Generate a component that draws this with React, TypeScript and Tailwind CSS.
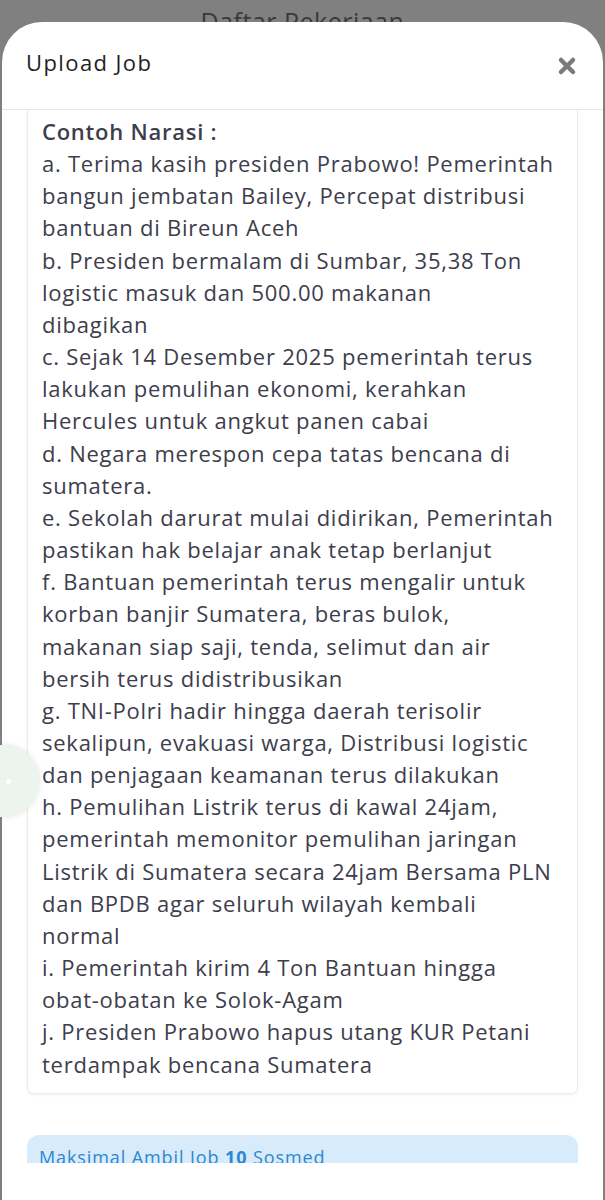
import React from 'react';

const lines: string[] = [
  'a. Terima kasih presiden Prabowo! Pemerintah',
  'bangun jembatan Bailey, Percepat distribusi',
  'bantuan di Bireun Aceh',
  'b. Presiden bermalam di Sumbar, 35,38 Ton',
  'logistic masuk dan 500.00 makanan',
  'dibagikan',
  'c. Sejak 14 Desember 2025 pemerintah terus',
  'lakukan pemulihan ekonomi, kerahkan',
  'Hercules untuk angkut panen cabai',
  'd. Negara merespon cepa tatas bencana di',
  'sumatera.',
  'e. Sekolah darurat mulai didirikan, Pemerintah',
  'pastikan hak belajar anak tetap berlanjut',
  'f. Bantuan pemerintah terus mengalir untuk',
  'korban banjir Sumatera, beras bulok,',
  'makanan siap saji, tenda, selimut dan air',
  'bersih terus didistribusikan',
  'g. TNI-Polri hadir hingga daerah terisolir',
  'sekalipun, evakuasi warga, Distribusi logistic',
  'dan penjagaan keamanan terus dilakukan',
  'h. Pemulihan Listrik terus di kawal 24jam,',
  'pemerintah memonitor pemulihan jaringan',
  'Listrik di Sumatera secara 24jam Bersama PLN',
  'dan BPDB agar seluruh wilayah kembali',
  'normal',
  'i. Pemerintah kirim 4 Ton Bantuan hingga',
  'obat-obatan ke Solok-Agam',
  'j. Presiden Prabowo hapus utang KUR Petani',
  'terdampak bencana Sumatera',
];

export default function App() {
  return (
    <div className="relative h-[1200px] w-[605px] overflow-hidden bg-[#808080] font-['Open_Sans',sans-serif]">
      {/* page behind the sheet */}
      <div className="flex h-[22px] items-end justify-center">
        <span className="translate-y-[12px] text-[25px] leading-none tracking-[0.5px] text-[#3a3a3a]">Daftar Pekerjaan</span>
      </div>

      {/* sheet */}
      <div className="relative mx-[2px] flex h-[1178px] flex-col rounded-t-[40px] bg-white">
        <header className="flex h-[88px] shrink-0 items-center justify-between border-b border-[#e6e6e6] pb-[6px] pl-[24px] pr-[26px]">
          <h2 className="text-[22px] font-medium tracking-[1.4px] text-[#1f1f1f]">Upload Job</h2>
          <svg width="20" height="20" viewBox="0 0 20 20" className="mt-[6px]">
            <path d="M4 4 L16 16 M16 4 L4 16" stroke="#7a7a7a" strokeWidth="4.5" strokeLinecap="round" />
          </svg>
        </header>

        <div className="h-[1053px] overflow-hidden px-[25px]">
          <div className="rounded-b-[6px] border border-t-0 border-[#ececec] px-[14px] pb-[13px] pt-[5px] shadow-[0_1px_3px_rgba(0,0,0,0.06)]">
            <div className="whitespace-nowrap text-[22px] leading-[32.15px] tracking-[0.75px] text-[#3d3d4c]">
              <div className="font-semibold">Contoh Narasi :</div>
              {lines.map((l, i) => (
                <div key={i}>{l}</div>
              ))}
            </div>
          </div>

          <div className="mt-[41px] h-[60px] rounded-t-[12px] bg-[#d8ebfa] px-[12px] pt-[9px]">
            <p className="text-[18px] tracking-[0.9px] text-[#2a88d3]">
              Maksimal Ambil Job <span className="font-bold">10</span> Sosmed
            </p>
          </div>
        </div>
      </div>

      {/* floating button peeking from the left */}
      <div className="absolute left-[-33px] top-[745px] flex h-[72px] w-[72px] items-center justify-end rounded-full bg-[#edf3ed] pr-[28px] shadow-[0_0_6px_rgba(0,0,0,0.12)]">
        <span className="h-[5px] w-[5px] rounded-full bg-white" />
      </div>
    </div>
  );
}
